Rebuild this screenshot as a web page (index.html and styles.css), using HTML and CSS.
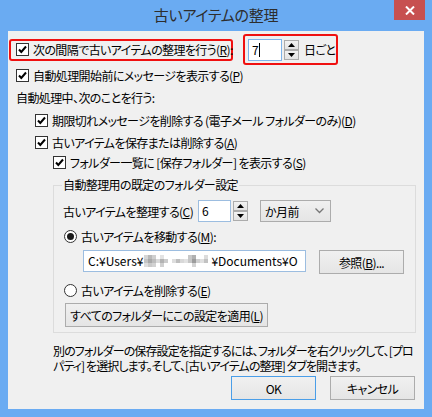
FILE: index.html
```html
<!DOCTYPE html>
<html lang="ja">
<head>
<meta charset="utf-8">
<title>古いアイテムの整理</title>
<link rel="stylesheet" href="styles.css">
</head>
<body>
<div class="window">
  <div class="titlebar">
    <span></span>
    <span class="title">古いアイテムの整理</span>
    <span class="close-wrap"><span class="close"><svg width="10" height="9" viewBox="0 0 10 9"><path d="M1 0.5 L9 8.5 M9 0.5 L1 8.5" stroke="#fff" stroke-width="2"/></svg></span></span>
  </div>
  <div class="client">
    <div class="row1">
      <div class="redbox rb1">
        <span class="cb"><svg width="11" height="11" viewBox="0 0 11 11"><path d="M2 5.5 L4.3 8 L9 2.5" fill="none" stroke="#000" stroke-width="2"/></svg></span>
        <span class="lbl">次の間隔で古いアイテムの整理を行う(<u>R</u>):</span>
      </div>
      <div class="redbox rb2">
        <span class="textbox tb7">7<span class="caret"></span></span>
        <span class="spin"><span class="spin-btn"><svg width="7" height="4" viewBox="0 0 7 4"><path d="M0 4 L3.5 0 L7 4Z" fill="#000"/></svg></span><span class="spin-btn"><svg width="7" height="4" viewBox="0 0 7 4"><path d="M0 0 L3.5 4 L7 0Z" fill="#000"/></svg></span></span>
        <span class="unit">日ごと</span>
      </div>
    </div>

    <div class="row r2">
      <span class="cb"><svg width="11" height="11" viewBox="0 0 11 11"><path d="M2 5.5 L4.3 8 L9 2.5" fill="none" stroke="#000" stroke-width="2"/></svg></span>
      <span class="lbl">自動処理開始前にメッセージを表示する(<u>P</u>)</span>
    </div>
    <div class="row r3">自動処理中、次のことを行う:</div>
    <div class="row r4">
      <span class="cb"><svg width="11" height="11" viewBox="0 0 11 11"><path d="M2 5.5 L4.3 8 L9 2.5" fill="none" stroke="#000" stroke-width="2"/></svg></span>
      <span class="lbl">期限切れメッセージを削除する (電子メール フォルダーのみ)(<u>D</u>)</span>
    </div>
    <div class="row r5">
      <span class="cb"><svg width="11" height="11" viewBox="0 0 11 11"><path d="M2 5.5 L4.3 8 L9 2.5" fill="none" stroke="#000" stroke-width="2"/></svg></span>
      <span class="lbl">古いアイテムを保存または削除する(<u>A</u>)</span>
    </div>
    <div class="row r6">
      <span class="cb"><svg width="11" height="11" viewBox="0 0 11 11"><path d="M2 5.5 L4.3 8 L9 2.5" fill="none" stroke="#000" stroke-width="2"/></svg></span>
      <span class="lbl">フォルダー一覧に [保存フォルダー] を表示する(<u>S</u>)</span>
    </div>

    <fieldset class="group">
      <legend>自動整理用の既定のフォルダー設定</legend>
      <div class="row-c">
        <span class="lbl-c">古いアイテムを整理する(<u>C</u>)</span>
        <span class="textbox tb6">6</span>
        <span class="spin"><span class="spin-btn"><svg width="7" height="4" viewBox="0 0 7 4"><path d="M0 4 L3.5 0 L7 4Z" fill="#000"/></svg></span><span class="spin-btn"><svg width="7" height="4" viewBox="0 0 7 4"><path d="M0 0 L3.5 4 L7 0Z" fill="#000"/></svg></span></span>
        <span class="combo"><span>か月前</span><svg width="9" height="6" viewBox="0 0 9 6"><path d="M0.5 0.5 L4.5 4.5 L8.5 0.5" fill="none" stroke="#777" stroke-width="1.3"/></svg></span>
      </div>
      <div class="row radio-row rm">
        <span class="radio on"><span class="dot"></span></span>
        <span class="lbl">古いアイテムを移動する(<u>M</u>):</span>
      </div>
      <div class="path-row">
        <span class="textbox path">C:¥Users¥<svg class="mosaic" width="66" height="12" viewBox="0 0 66 12"><rect x="0" y="0" width="4" height="4" fill="#d6d6d6"/><rect x="4" y="0" width="4" height="4" fill="#b9b9b9"/><rect x="8" y="0" width="4" height="4" fill="#cfcfcf"/><rect x="0" y="4" width="4" height="4" fill="#c4c4c4"/><rect x="4" y="4" width="4" height="4" fill="#a9a9a9"/><rect x="8" y="4" width="4" height="4" fill="#bdbdbd"/><rect x="12" y="4" width="4" height="4" fill="#dadada"/><rect x="0" y="8" width="4" height="4" fill="#dddddd"/><rect x="4" y="8" width="4" height="4" fill="#c9c9c9"/><rect x="8" y="8" width="4" height="4" fill="#d2d2d2"/><rect x="16" y="0" width="4" height="4" fill="#e3e3e3"/><rect x="16" y="4" width="4" height="4" fill="#b3b3b3"/><rect x="20" y="4" width="4" height="4" fill="#cccccc"/><rect x="16" y="8" width="4" height="4" fill="#d0d0d0"/><rect x="28" y="4" width="4" height="4" fill="#dedede"/><rect x="32" y="4" width="4" height="4" fill="#bebebe"/><rect x="36" y="4" width="4" height="4" fill="#d8d8d8"/><rect x="40" y="4" width="4" height="4" fill="#e2e2e2"/><rect x="44" y="0" width="4" height="4" fill="#c8c8c8"/><rect x="48" y="0" width="4" height="4" fill="#b0b0b0"/><rect x="44" y="4" width="4" height="4" fill="#c6c6c6"/><rect x="48" y="4" width="4" height="4" fill="#9c9c9c"/><rect x="52" y="4" width="4" height="4" fill="#cfcfcf"/><rect x="48" y="8" width="4" height="4" fill="#d4d4d4"/><rect x="56" y="4" width="4" height="4" fill="#e0e0e0"/><rect x="60" y="0" width="4" height="4" fill="#dcdcdc"/><rect x="60" y="4" width="4" height="4" fill="#c2c2c2"/></svg>¥Documents¥O</span>
        <span class="btn browse">参照(<u>B</u>)...</span>
      </div>
      <div class="row radio-row re">
        <span class="radio"></span>
        <span class="lbl">古いアイテムを削除する(<u>E</u>)</span>
      </div>
      <span class="btn apply">すべてのフォルダーにこの設定を適用(<u>L</u>)</span>
    </fieldset>

    <p class="note">別のフォルダーの保存設定を指定するには、フォルダーを右クリックして、[プロ<br>パティ] を選択します。そして、[古いアイテムの整理] タブを開きます。</p>

    <div class="actions">
      <span class="btn dlg default">OK</span>
      <span class="btn dlg">キャンセル</span>
    </div>
  </div>
</div>
</body>
</html>
```
FILE: styles.css
```css
* { box-sizing: border-box; }
html, body { margin: 0; padding: 0; }
body {
  width: 432px;
  height: 417px;
  overflow: hidden;
  font-family: "Noto Sans CJK JP", "Noto Sans", sans-serif;
  font-size: 12px;
  letter-spacing: -0.6px;
  color: #000;
  font-feature-settings: "palt";
  background: #6aabf2;
}
.window {
  width: 432px;
  height: 417px;
  background: #6aabf2;
  padding: 0 8px 8px;
  display: flex;
  flex-direction: column;
}
.titlebar {
  height: 31px;
  flex: none;
  margin: 0 -8px;
  display: grid;
  grid-template-columns: 1fr auto 1fr;
  align-items: start;
}
.title {
  font-size: 15px;
  letter-spacing: -0.3px;
  line-height: 30px;
  color: #2d2d2d;
}
.close-wrap { display: flex; justify-content: flex-end; padding-right: 7px; }
.close {
  width: 31px;
  height: 20px;
  background: #c75050;
  display: flex;
  align-items: center;
  justify-content: center;
}
.client {
  flex: 1;
  background: #f0f0f0;
  display: flex;
  flex-direction: column;
  align-items: flex-start;
}
u { text-decoration: underline; text-underline-offset: 1px; }

/* checkbox */
.cb {
  width: 13px;
  height: 13px;
  border: 1px solid #333;
  background: #fff;
  display: inline-flex;
  align-items: center;
  justify-content: center;
  flex: none;
}
.lbl { white-space: nowrap; }
.row {
  height: 20px;
  display: flex;
  align-items: center;
  white-space: nowrap;
}
.row .cb { margin-right: 4px; }

.row1 {
  margin-top: 3px;
  height: 31px;
  display: flex;
  align-items: center;
}
.redbox {
  border: 2px solid #f01010;
  border-radius: 3px;
  display: flex;
  align-items: center;
  flex: none;
  white-space: nowrap;
}
.rb1 {
  margin-left: 1px;
  width: 224px;
  height: 22px;
  padding-left: 5px;
}
.rb1 .cb { margin-right: 4px; }
.rb2 {
  margin-left: 10px;
  width: 95px;
  height: 31px;
  padding-left: 3px;
}
.textbox {
  background: #fff;
  border: 1px solid #abadb3;
  height: 22px;
  line-height: 20px;
  padding-left: 3px;
  display: inline-flex;
  align-items: center;
  white-space: nowrap;
  overflow: hidden;
  flex: none;
}
.tb7 { width: 34px; border-color: #7eb4ea; }
.caret { width: 1px; height: 14px; background: #000; margin-left: 1px; }
.spin {
  margin-left: 2px;
  width: 15px;
  height: 20px;
  display: flex;
  flex-direction: column;
  flex: none;
}
.spin-btn {
  height: 10px;
  border: 1px solid #acacac;
  background: linear-gradient(#f2f2f2, #e3e3e3);
  display: flex;
  align-items: center;
  justify-content: center;
}
.unit { margin-left: 5px; flex: none; }

.r2 { margin-left: 8px; }
.r3 { margin-left: 8px; margin-top: 2px; }
.r4 { margin-left: 27px; margin-top: 3px; }
.r5 { margin-left: 27px; margin-top: 2px; }
.r6 { margin-left: 45px; }

.group {
  margin: 5px 0 0 45px;
  width: 363px;
  padding: 0 0 5px 9px;
  border: 1px solid #dcdcdc;
  min-width: 0;
}
.group legend {
  padding: 0 1px;
  margin-left: -1px;
  line-height: 16px;
}
.row-c {
  margin-top: 7px;
  display: flex;
  align-items: center;
  height: 22px;
}
.lbl-c { width: 135px; flex: none; white-space: nowrap; }
.tb6 { width: 33px; border-color: #9cbde0; }
.combo {
  margin-left: 12px;
  width: 71px;
  height: 22px;
  border: 1px solid #acacac;
  background: linear-gradient(#f0f0f0, #e5e5e5);
  display: flex;
  align-items: center;
  justify-content: space-between;
  padding: 0 6px 0 4px;
  flex: none;
}
.radio-row .lbl { margin-left: 4px; }
.radio {
  width: 13px;
  height: 13px;
  border-radius: 50%;
  border: 1px solid #333;
  background: #fff;
  display: inline-flex;
  align-items: center;
  justify-content: center;
  margin-left: 1px;
  flex: none;
}
.radio .dot { width: 7px; height: 7px; border-radius: 50%; background: #1a1a1a; }
.rm { margin-top: 4px; }
.path-row {
  margin-top: 4px;
  display: flex;
  align-items: flex-start;
}
.path {
  margin-left: 20px;
  width: 223px;
  border-color: #9cbde0;
  padding-left: 4px;
  letter-spacing: 0;
}
.mosaic { flex: none; margin: 0 1px; }
.btn {
  display: inline-flex;
  align-items: center;
  justify-content: center;
  border: 1px solid #acacac;
  background: linear-gradient(#f0f0f0, #e5e5e5);
  white-space: nowrap;
  flex: none;
}
.browse { margin-left: 13px; width: 85px; height: 24px; }
.re { margin-top: 6px; }
.apply { margin-top: 3px; margin-left: 2px; width: 203px; height: 24px; }

.note {
  margin: 10px 0 0 45px;
  line-height: 15px;
  white-space: nowrap;
  letter-spacing: -0.9px;
}
.actions {
  align-self: stretch;
  margin-top: 3px;
  margin-right: 9px;
  display: flex;
  justify-content: flex-end;
  gap: 14px;
}
.dlg { width: 85px; height: 24px; }
.default { border-color: #4a9ee8; }
```
